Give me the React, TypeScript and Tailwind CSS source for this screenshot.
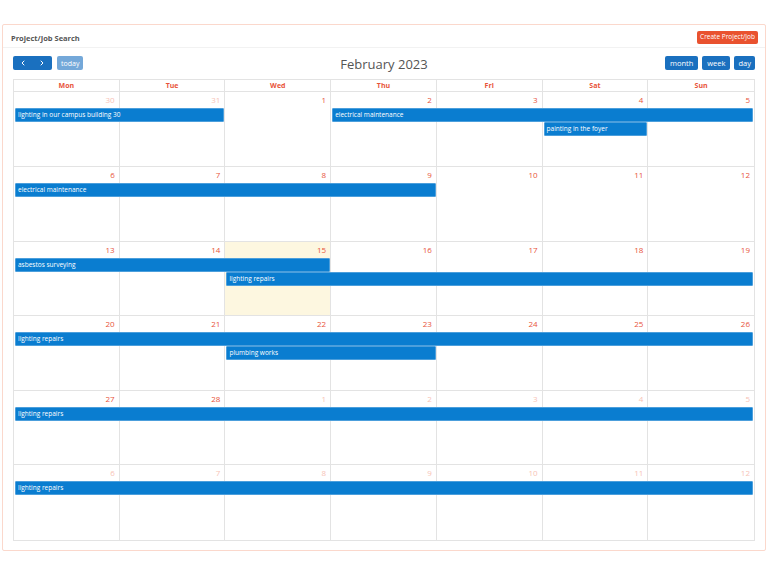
import React from 'react'
import { ChevronLeft, ChevronRight } from 'lucide-react'

type Ev = { title: string; start: number; span: number; level: number }
type Week = { days: { n: number; muted: boolean }[]; events: Ev[]; today?: number }

const DAY_NAMES = ['Mon', 'Tue', 'Wed', 'Thu', 'Fri', 'Sat', 'Sun']

function mk(nums: number[], mutedFn: (i: number) => boolean) {
  return nums.map((n, i) => ({ n, muted: mutedFn(i) }))
}

const WEEKS: Week[] = [
  {
    days: mk([30, 31, 1, 2, 3, 4, 5], i => i < 2),
    events: [
      { title: 'lighting in our campus building 30', start: 1, span: 2, level: 0 },
      { title: 'electrical maintenance', start: 4, span: 4, level: 0 },
      { title: 'painting in the foyer', start: 6, span: 1, level: 1 },
    ],
  },
  {
    days: mk([6, 7, 8, 9, 10, 11, 12], () => false),
    events: [{ title: 'electrical maintenance', start: 1, span: 4, level: 0 }],
  },
  {
    days: mk([13, 14, 15, 16, 17, 18, 19], () => false),
    today: 2,
    events: [
      { title: 'asbestos surveying', start: 1, span: 3, level: 0 },
      { title: 'lighting repairs', start: 3, span: 5, level: 1 },
    ],
  },
  {
    days: mk([20, 21, 22, 23, 24, 25, 26], () => false),
    events: [
      { title: 'lighting repairs', start: 1, span: 7, level: 0 },
      { title: 'plumbing works', start: 3, span: 2, level: 1 },
    ],
  },
  {
    days: mk([27, 28, 1, 2, 3, 4, 5], i => i >= 2),
    events: [{ title: 'lighting repairs', start: 1, span: 7, level: 0 }],
  },
  {
    days: mk([6, 7, 8, 9, 10, 11, 12], () => true),
    events: [{ title: 'lighting repairs', start: 1, span: 7, level: 0 }],
  },
]

function WeekRow({ week, last }: { week: Week; last: boolean }) {
  return (
    <div className={`grid grid-cols-7 grid-rows-[16px_14px_14px_1fr] h-[74.6px] ${last ? '' : 'border-b border-[#e3e3e3]'}`}>
      {week.days.map((d, i) => (
        <div
          key={i}
          style={{ gridColumn: `${i + 1} / span 1`, gridRow: '1 / -1' }}
          className={`flex justify-end pr-[4px] pt-[3px] ${i < 6 ? 'border-r border-[#e3e3e3]' : ''} ${week.today === i ? 'bg-[#fdf7e0]' : ''}`}
        >
          <span className={`text-[8px] leading-[10px] ${d.muted ? 'text-[#f7c3b6]' : 'text-[#e8543a]'}`}>{d.n}</span>
        </div>
      ))}
      {week.events.map((e, i) => (
        <div
          key={i}
          style={{ gridColumn: `${e.start} / span ${e.span}`, gridRow: `${e.level + 2} / span 1` }}
          className="z-10 mx-[1px] h-[14px] bg-[#0a7dd0] border border-[#4c9fdc] rounded-[1px] flex items-center px-[2px]"
        >
          <span className="text-[6.5px] text-white leading-[12px] whitespace-nowrap">{e.title}</span>
        </div>
      ))}
    </div>
  )
}

export default function App() {
  return (
    <div className="w-[768px] h-[576px] bg-white pt-[24px] px-[2px]" style={{ fontFamily: '"Open Sans", "Liberation Sans", sans-serif' }}>
      <div className="w-[764px] h-[527px] border border-[#fbd8cc] rounded-[2px] flex flex-col">
        <div className="h-[25px] flex items-center justify-between pl-[8px] pr-[7px] pt-[3px] border-b border-[#f2f2f2]">
          <span className="text-[7.5px] font-bold text-[#555] leading-[12px]">Project/Job Search</span>
          <button className="h-[13px] px-[3px] bg-[#e9522f] rounded-[2px] text-white text-[6.5px] leading-none">Create Project/Job</button>
        </div>
        <div className="px-[10px] pt-[8px] pb-[9px] flex flex-col flex-1">
          <div className="h-[14px] flex items-center justify-between mb-[9px]">
            <div className="flex items-center gap-[5px] w-[200px]">
              <div className="h-[14px] w-[39px] bg-[#1a70bf] rounded-[2px] flex items-center justify-around text-white">
                <ChevronLeft size={8} strokeWidth={3} />
                <ChevronRight size={8} strokeWidth={3} />
              </div>
              <button className="h-[14px] px-[4px] bg-[#74a8d9] rounded-[2px] text-white text-[7px] leading-none">today</button>
            </div>
            <div className="text-[13px] text-[#555] leading-[16px] pt-[2px]">February 2023</div>
            <div className="flex items-center justify-end gap-[4px] w-[200px]">
              <button className="h-[14px] px-[5px] bg-[#1a70bf] rounded-[2px] text-white text-[7.5px] leading-none">month</button>
              <button className="h-[14px] px-[5px] bg-[#1a70bf] rounded-[2px] text-white text-[7.5px] leading-none">week</button>
              <button className="h-[14px] px-[4px] bg-[#1a70bf] rounded-[2px] text-white text-[7.5px] leading-none">day</button>
            </div>
          </div>
          <div className="w-[742px] border border-[#e3e3e3]">
            <div className="grid grid-cols-7 h-[12px] border-b border-[#e3e3e3]">
              {DAY_NAMES.map((d, i) => (
                <div key={d} className={`flex items-center justify-center text-[7px] font-bold text-[#e8543a] ${i < 6 ? 'border-r border-[#e3e3e3]' : ''}`}>
                  {d}
                </div>
              ))}
            </div>
            {WEEKS.map((w, i) => (
              <WeekRow key={i} week={w} last={i === WEEKS.length - 1} />
            ))}
          </div>
        </div>
      </div>
    </div>
  )
}
